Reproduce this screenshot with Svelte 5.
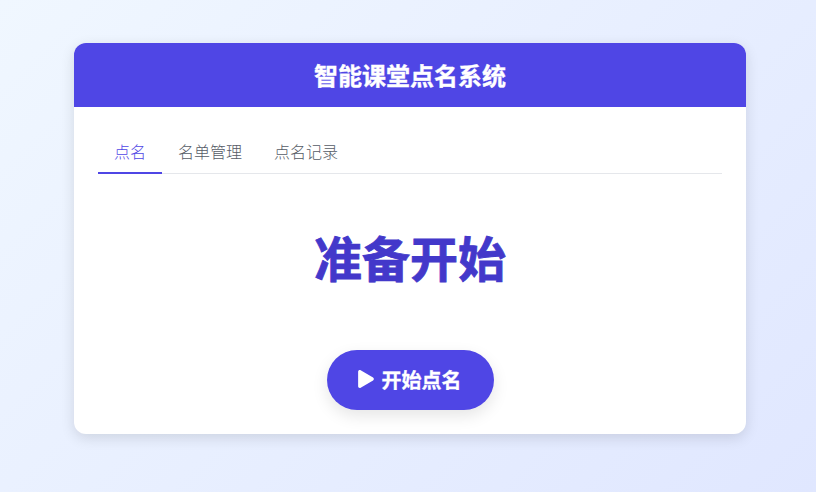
<script lang="ts">
  const tabs = ['点名', '名单管理', '点名记录'];
  let active = $state(0);
</script>

<div class="page">
  <div class="card">
    <header class="card-header">
      <h1>智能课堂点名系统</h1>
    </header>
    <div class="card-body">
      <nav class="tabs">
        {#each tabs as tab, i}
          <button class="tab" class:active={active === i} onclick={() => (active = i)}>{tab}</button>
        {/each}
      </nav>
      <div class="display">准备开始</div>
      <div class="actions">
        <button class="start">
          <svg viewBox="0 0 448 512" aria-hidden="true"><path d="M424.4 214.7L72.4 6.6C43.8-10.3 0 6.1 0 47.9V464c0 37.5 40.7 60.1 72.4 41.3l352-208c31.4-18.5 31.5-64.1 0-82.6z"/></svg>
          开始点名
        </button>
      </div>
    </div>
  </div>
</div>

<style>
  :global(body) {
    margin: 0;
    font-family: Inter, "Noto Sans CJK SC", sans-serif;
  }

  .page {
    width: 816px;
    height: 492px;
    box-sizing: border-box;
    padding: 43px 70px 58px 74px;
    background: linear-gradient(135deg, #f0f7ff, #e0e7ff);
  }

  .card {
    height: 391px;
    background: #fff;
    border-radius: 12px;
    overflow: hidden;
    box-shadow: 0 4px 14px rgba(0, 0, 0, 0.12);
  }

  .card-header {
    height: 64px;
    display: flex;
    align-items: center;
    justify-content: center;
    background: #4f46e5;
    color: #fff;
  }

  .card-header h1 {
    margin: 0 0 2px;
    font-size: 24px;
    font-weight: 700;
    -webkit-text-stroke: 0.35px #fff;
  }

  .card-body {
    padding: 24px;
  }

  .tabs {
    display: flex;
    border-bottom: 1px solid #e5e7eb;
  }

  .tab {
    padding: 8px 16px 10px;
    height: 43px;
    border: none;
    border-bottom: 2px solid transparent;
    margin-bottom: -1px;
    background: none;
    font-family: inherit;
    font-size: 16px;
    font-weight: 300;
    color: #555b66;
  }

  .tab.active {
    color: #4f46e5;
    border-bottom-color: #4f46e5;
  }

  .display {
    margin-top: 50px;
    text-align: center;
    font-size: 48px;
    font-weight: 700;
    line-height: 72px;
    color: #4338ca;
    -webkit-text-stroke: 0.8px #4338ca;
  }

  .actions {
    display: flex;
    justify-content: center;
    margin-top: 54px;
  }

  .start {
    display: flex;
    align-items: center;
    gap: 8px;
    height: 60px;
    width: 167px;
    padding: 0 0 2px 31px;
    border: none;
    border-radius: 30px;
    background: #4f46e5;
    color: #fff;
    font-family: inherit;
    font-size: 20px;
    font-weight: 700;
    -webkit-text-stroke: 0.3px #fff;
    box-shadow: 0 6px 16px rgba(0, 0, 0, 0.1);
  }

  .start svg {
    width: 16px;
    height: 18px;
    fill: currentColor;
  }
</style>
